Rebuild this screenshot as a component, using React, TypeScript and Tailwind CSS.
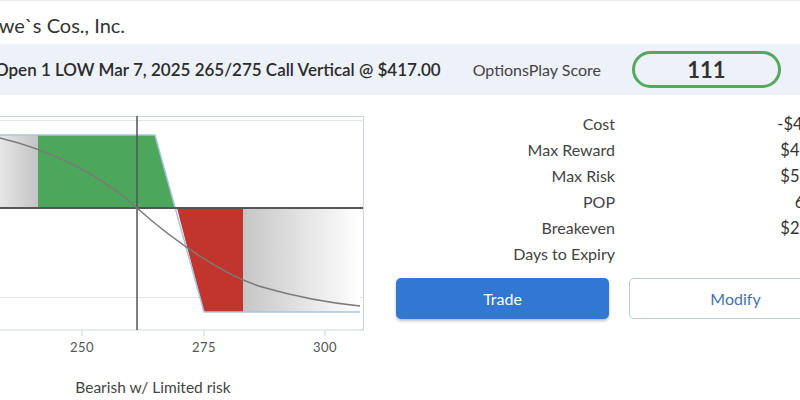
const metrics = [
  { label: "Cost", value: "-$417.00" },
  { label: "Max Reward", value: "$417.00" },
  { label: "Max Risk", value: "$583.00" },
  { label: "POP", value: "64%" },
  { label: "Breakeven", value: "$269.17" },
  { label: "Days to Expiry", value: "6" },
];

const PayoffChart = () => (
  <svg width="364" height="240" viewBox="0 0 364 240" className="block">
    <defs>
      <linearGradient id="lossSide" x1="0" x2="1" y1="0" y2="0">
        <stop offset="0" stopColor="#c6c6c6" />
        <stop offset="1" stopColor="#ffffff" />
      </linearGradient>
      <linearGradient id="gainSide" x1="0" x2="1" y1="0" y2="0">
        <stop offset="0" stopColor="#e6e6e6" />
        <stop offset="1" stopColor="#c4c4c4" />
      </linearGradient>
    </defs>
    {/* frame + grid */}
    <rect x="-2" y="0.5" width="365.5" height="213.5" fill="#fff" stroke="#c9d6e8" />
    <line x1="0" x2="363" y1="4.5" y2="4.5" stroke="#e4e4e4" />
    <line x1="0" x2="363" y1="181.5" y2="181.5" stroke="#e4e4e4" />

    {/* shaded regions */}
    <rect x="0" y="19" width="38" height="73" fill="url(#gainSide)" />
    <polygon points="38,19 155,19 175,92 38,92" fill="#4da75b" />
    <polygon points="177,92 243,92 243,196 204,196" fill="#c1352d" />
    <rect x="243" y="92" width="117" height="104" fill="url(#lossSide)" />

    {/* payoff line */}
    <polyline points="0,19 155,19 204,196 360,196" fill="none" stroke="#a9c4e2" strokeWidth="1.5" />

    {/* axes */}
    <line x1="0" x2="363" y1="92" y2="92" stroke="#555" strokeWidth="2" />
    <line x1="137" x2="137" y1="0" y2="214" stroke="#555" strokeWidth="1.5" />

    {/* probability curve */}
    <path
      d="M0,22 C50,34 100,58 137,92 C175,126 225,160 262,171 C300,182 330,187 360,190"
      fill="none"
      stroke="#7a7a7a"
      strokeWidth="1.5"
    />

    {/* ticks + labels */}
    {[
      { x: 82, t: "250" },
      { x: 204, t: "275" },
      { x: 325, t: "300" },
    ].map((tk) => (
      <g key={tk.t}>
        <line x1={tk.x} x2={tk.x} y1="214" y2="220" stroke="#c9d6e8" />
        <text
          x={tk.x}
          y="236"
          textAnchor="middle"
          fontSize="13"
          fill="#555"
          fontFamily="Lato, 'Open Sans', sans-serif"
          letterSpacing="0.5"
        >
          {tk.t}
        </text>
      </g>
    ))}
  </svg>
);

const App = () => {
  return (
    <div className="w-[800px] h-[400px] overflow-hidden bg-white border-t border-[#ececec] font-['Lato','Open_Sans',sans-serif] text-[#333]">
      {/* title */}
      <div className="h-[43px] flex items-center pt-[4px]">
        <h1 className="ml-[-22px] text-[20px] text-[#333] whitespace-nowrap">Lowe`s Cos., Inc.</h1>
      </div>

      {/* strategy bar */}
      <div className="h-[51px] bg-[#edf1fa] flex items-center whitespace-nowrap">
        <span className="ml-[-5px] text-[17px] font-semibold text-[#2b2b2b]">
          Open 1 LOW Mar 7, 2025 265/275 Call Vertical @ $417.00
        </span>
        <span className="ml-[32px] text-[16px] text-[#444]">OptionsPlay Score</span>
        <div className="ml-[31px] w-[149px] h-[37px] rounded-full border-[3px] border-[#55a85c] flex items-center justify-center text-[22px] font-bold text-[#333]">
          111
        </div>
      </div>

      <div className="flex">
        {/* chart column */}
        <div className="w-[364px] shrink-0 pt-[21px]">
          <PayoffChart />
          <p className="mt-[20px] w-[306px] text-center text-[15.5px] text-[#444]">Bearish w/ Limited risk</p>
        </div>

        {/* details column */}
        <div className="ml-[32px] pt-[16px] shrink-0">
          {metrics.map((m) => (
            <div key={m.label} className="flex text-[16px] leading-[26px] whitespace-nowrap">
              <span className="w-[219px] text-right text-[#444]">{m.label}</span>
              <span className="ml-[102px] w-[188px] text-center text-[16.5px] text-[#333]">{m.value}</span>
            </div>
          ))}
          <div className="mt-[11px] flex gap-[20px]">
            <button className="w-[213px] h-[41px] rounded-[5px] bg-[#3277d2] text-white text-[16px] shadow-[0_2px_3px_rgba(0,0,0,0.25)]">
              Trade
            </button>
            <button className="w-[213px] h-[41px] rounded-[5px] border border-[#b9cadf] bg-white text-[#4472b4] text-[16px]">
              Modify
            </button>
          </div>
        </div>
      </div>
    </div>
  );
};

export default App;
